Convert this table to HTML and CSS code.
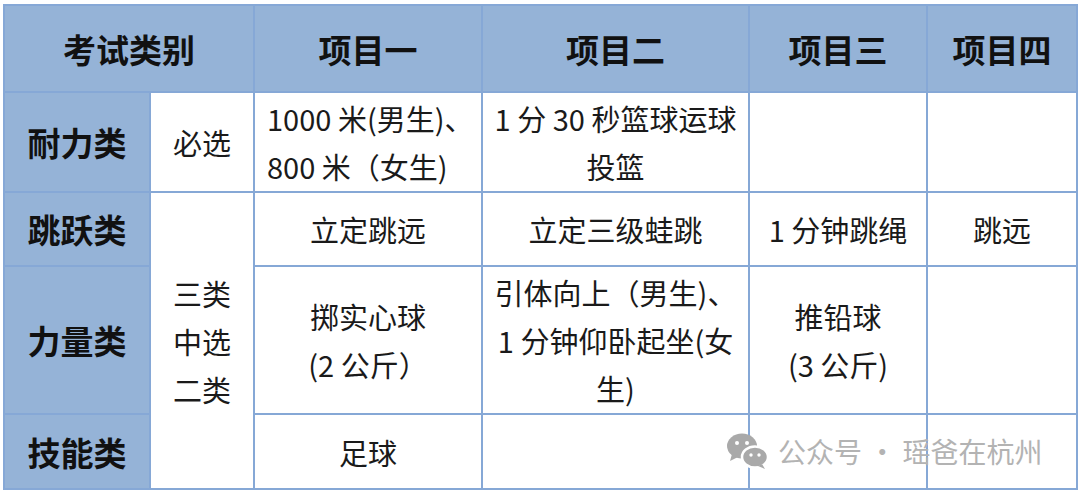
FILE: index.html
```html
<!DOCTYPE html>
<html lang="zh">
<head>
<meta charset="utf-8">
<link rel="stylesheet" href="styles.css">
</head>
<body>
<div class="wrap">
<table class="grid">
  <colgroup>
    <col class="c1"><col class="c2"><col class="c3"><col class="c4"><col class="c5"><col class="c6">
  </colgroup>
  <tr class="r0">
    <th colspan="2">考试类别</th>
    <th>项目一</th>
    <th>项目二</th>
    <th>项目三</th>
    <th>项目四</th>
  </tr>
  <tr class="r1">
    <th class="side">耐力类</th>
    <td>必选</td>
    <td class="left">1000 米(男生)、<br>800 米（女生)</td>
    <td>1 分 30 秒篮球运球<br>投篮</td>
    <td></td>
    <td></td>
  </tr>
  <tr class="r2">
    <th class="side">跳跃类</th>
    <td rowspan="3">三类<br>中选<br>二类</td>
    <td>立定跳远</td>
    <td>立定三级蛙跳</td>
    <td>1 分钟跳绳</td>
    <td>跳远</td>
  </tr>
  <tr class="r3">
    <th class="side">力量类</th>
    <td>掷实心球<br>(2 公斤）</td>
    <td>引体向上（男生)、<br>1 分钟仰卧起坐(女<br>生)</td>
    <td>推铅球<br>(3 公斤)</td>
    <td></td>
  </tr>
  <tr class="r4">
    <th class="side">技能类</th>
    <td>足球</td>
    <td></td>
    <td></td>
    <td></td>
  </tr>
</table>
<div class="mark">
  <svg class="wx" viewBox="0 0 44 38" width="44" height="38">
    <ellipse cx="16" cy="14" rx="15" ry="12.5" fill="#a9a9a9"/>
    <path d="M6 22 L4 29 L12 25 Z" fill="#a9a9a9"/>
    <circle cx="11" cy="11" r="2" fill="#fff"/>
    <circle cx="21" cy="11" r="2" fill="#fff"/>
    <ellipse cx="29" cy="25" rx="13" ry="10.5" fill="#a9a9a9" stroke="#fff" stroke-width="2.5"/>
    <path d="M36 32 L39 37 L32 34 Z" fill="#a9a9a9"/>
    <circle cx="25" cy="23" r="1.7" fill="#fff"/>
    <circle cx="33" cy="23" r="1.7" fill="#fff"/>
  </svg>
  <span class="mtext">公众号 · 瑶爸在杭州</span>
</div>
</div>
</body>
</html>
```
FILE: styles.css
```css
html, body {
  margin: 0;
  padding: 0;
  background: #ffffff;
}
body {
  width: 1080px;
  height: 492px;
  overflow: hidden;
  font-family: "Noto Sans CJK SC", "Noto Sans", sans-serif;
  color: #111;
}
.wrap {
  position: relative;
  padding: 4px 0 0 3px;
}
.grid {
  border-collapse: collapse;
  table-layout: fixed;
  width: 1073px;
}
.c1 { width: 146px; }
.c2 { width: 104px; }
.c3 { width: 228px; }
.c4 { width: 267px; }
.c5 { width: 178px; }
.c6 { width: 150px; }
.grid th, .grid td {
  border: 2px solid #86a8d6;
  padding: 0;
  text-align: center;
  vertical-align: middle;
}
.grid th {
  background: #95b3d7;
  font-weight: 700;
  font-size: 33px;
  line-height: 40px;
  color: #111;
}
.grid td {
  font-size: 29px;
  line-height: 48px;
  font-weight: 400;
  color: #1a1a1a;
}
.grid td.left {
  text-align: left;
  padding-left: 12px;
}
.r0 { height: 87px; }
.r1 { height: 100px; }
.r2 { height: 74px; }
.r3 { height: 148px; }
.r4 { height: 75px; }
.mark {
  position: absolute;
  left: 726px;
  top: 431px;
  display: flex;
  align-items: center;
  gap: 8px;
}
.wx { display: block; }
.mtext {
  font-size: 28px;
  color: #b3b3b3;
}
```
